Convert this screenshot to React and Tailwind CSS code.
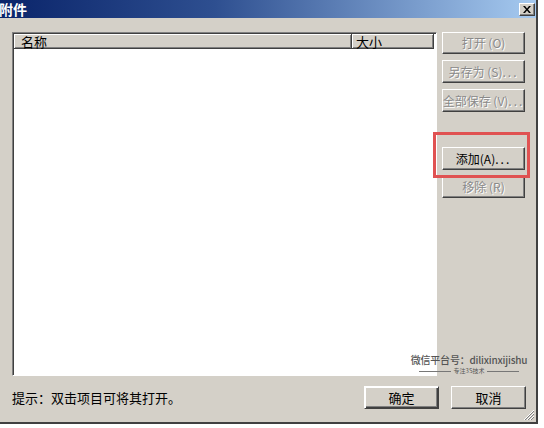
import React from "react";

const font = "font-['SimSun','Noto_Sans_CJK_SC',sans-serif]";

function Btn({ children, disabled, className = "" }) {
  return (
    <div
      className={`flex items-center justify-center bg-[#d4d0c8] border border-t-white border-l-white border-r-[#404040] border-b-[#404040] shadow-[inset_-1px_-1px_0_#808080] text-[12px] leading-none whitespace-pre ${
        disabled ? "text-[#8a8a8a] [text-shadow:1px_1px_0_#ffffff]" : "text-black"
      } ${className}`}
    >
      {children}
    </div>
  );
}

export default function App() {
  return (
    <div className={`w-[544px] h-[428px] bg-white relative ${font}`}>
      <div className="w-[538px] h-[424px] bg-[#d4d0c8] flex flex-col border-r-2 border-b-2 border-r-[#404040] border-b-[#404040] relative">
        {/* Title bar */}
        <div className="h-[18px] flex items-center justify-between bg-[linear-gradient(to_right,#0a246a,#2e4f90_40%,#a6caf0)]">
          <span className="text-white font-bold text-[14px] leading-none -ml-[1px]">附件</span>
          <div className="w-[16px] h-[13px] mr-[1px] bg-[#d4d0c8] border border-t-white border-l-white border-r-[#404040] border-b-[#404040] shadow-[inset_-1px_-1px_0_#808080] flex items-center justify-center">
            <svg width="8" height="7" viewBox="0 0 8 7">
              <path d="M0 0h2l2 2.5L6 0h2L5 3.5 8 7H6L4 4.5 2 7H0l3-3.5z" fill="#000" />
            </svg>
          </div>
        </div>

        {/* Main row */}
        <div className="flex pl-[12px] pt-[14px]">
          {/* List box */}
          <div className="w-[425px] h-[344px] bg-white border border-t-[#808080] border-l-[#808080] border-r-white border-b-white shadow-[inset_1px_1px_0_#404040] pl-[1px] pt-[1px] flex flex-col">
            <div className="flex h-[15px] w-[420px] text-[13px] leading-none text-black">
              <div className="w-[338px] bg-[#d4d0c8] border-r border-b border-r-[#404040] border-b-[#404040] shadow-[inset_1px_1px_0_#fff,inset_-1px_-1px_0_#808080] pl-[7px] flex items-center">
                名称
              </div>
              <div className="flex-1 bg-[#d4d0c8] border-r border-b border-r-[#404040] border-b-[#404040] shadow-[inset_1px_1px_0_#fff,inset_-1px_-1px_0_#808080] pl-[4px] flex items-center">
                大小
              </div>
            </div>
          </div>

          {/* Buttons */}
          <div className="ml-[5px] flex flex-col w-[83px]">
            <Btn disabled className="h-[22px]">打开 (O)</Btn>
            <Btn disabled className="h-[23px] mt-[6px]">另存为 (S)<span className="tracking-[2px]">...</span></Btn>
            <Btn disabled className="h-[23px] mt-[6px]">全部保存 (V)<span className="tracking-[2px]">...</span></Btn>
            <Btn className="h-[23px] mt-[35px]">添加(A)<span className="tracking-[2px]">...</span></Btn>
            <Btn disabled className="h-[22px] mt-[6px]">移除 (R)</Btn>
          </div>
        </div>

        {/* Bottom row */}
        <div className="flex items-center mt-[10px] h-[23px] pl-[12px]">
          <span className="text-[13px] leading-none text-black">提示：双击项目可将其打开。</span>
          <Btn className="ml-auto w-[75px] h-[23px] text-[13px] border-black shadow-[inset_1px_1px_0_#fff,inset_-1px_-1px_0_#404040,inset_-2px_-2px_0_#808080]">
            <span className="text-[13px]">确定</span>
          </Btn>
          <Btn className="ml-[12px] mr-[10px] w-[75px] h-[23px]">
            <span className="text-[13px]">取消</span>
          </Btn>
        </div>

        {/* Resize grip */}
        <svg className="absolute right-[1px] bottom-[1px]" width="12" height="12" viewBox="0 0 12 12">
          <path d="M11 1L1 11M11 4L4 11M11 7L7 11" stroke="#ffffff" strokeWidth="1" />
          <path d="M11 2L2 11M11 5L5 11M11 8L8 11" stroke="#808080" strokeWidth="1" />
        </svg>
      </div>

      {/* Red annotation box */}
      <div className="absolute left-[433px] top-[132px] w-[97px] h-[46px] border-[3px] border-[#e05252]" />

      {/* Watermark */}
      <div className="absolute right-[14px] top-[355px] w-[122px] flex flex-col items-center text-[#555]">
        <span className="text-[10px] leading-none font-['Noto_Sans_CJK_SC',sans-serif] font-medium whitespace-nowrap tracking-[-0.2px]">微信平台号：dilixinxijishu</span>
        <div className="flex items-center mt-[3px] gap-[3px]">
          <div className="w-[32px] h-px bg-[#777]" />
          <span className="text-[6px] leading-none">专注3S技术</span>
          <div className="w-[32px] h-px bg-[#777]" />
        </div>
      </div>
    </div>
  );
}
